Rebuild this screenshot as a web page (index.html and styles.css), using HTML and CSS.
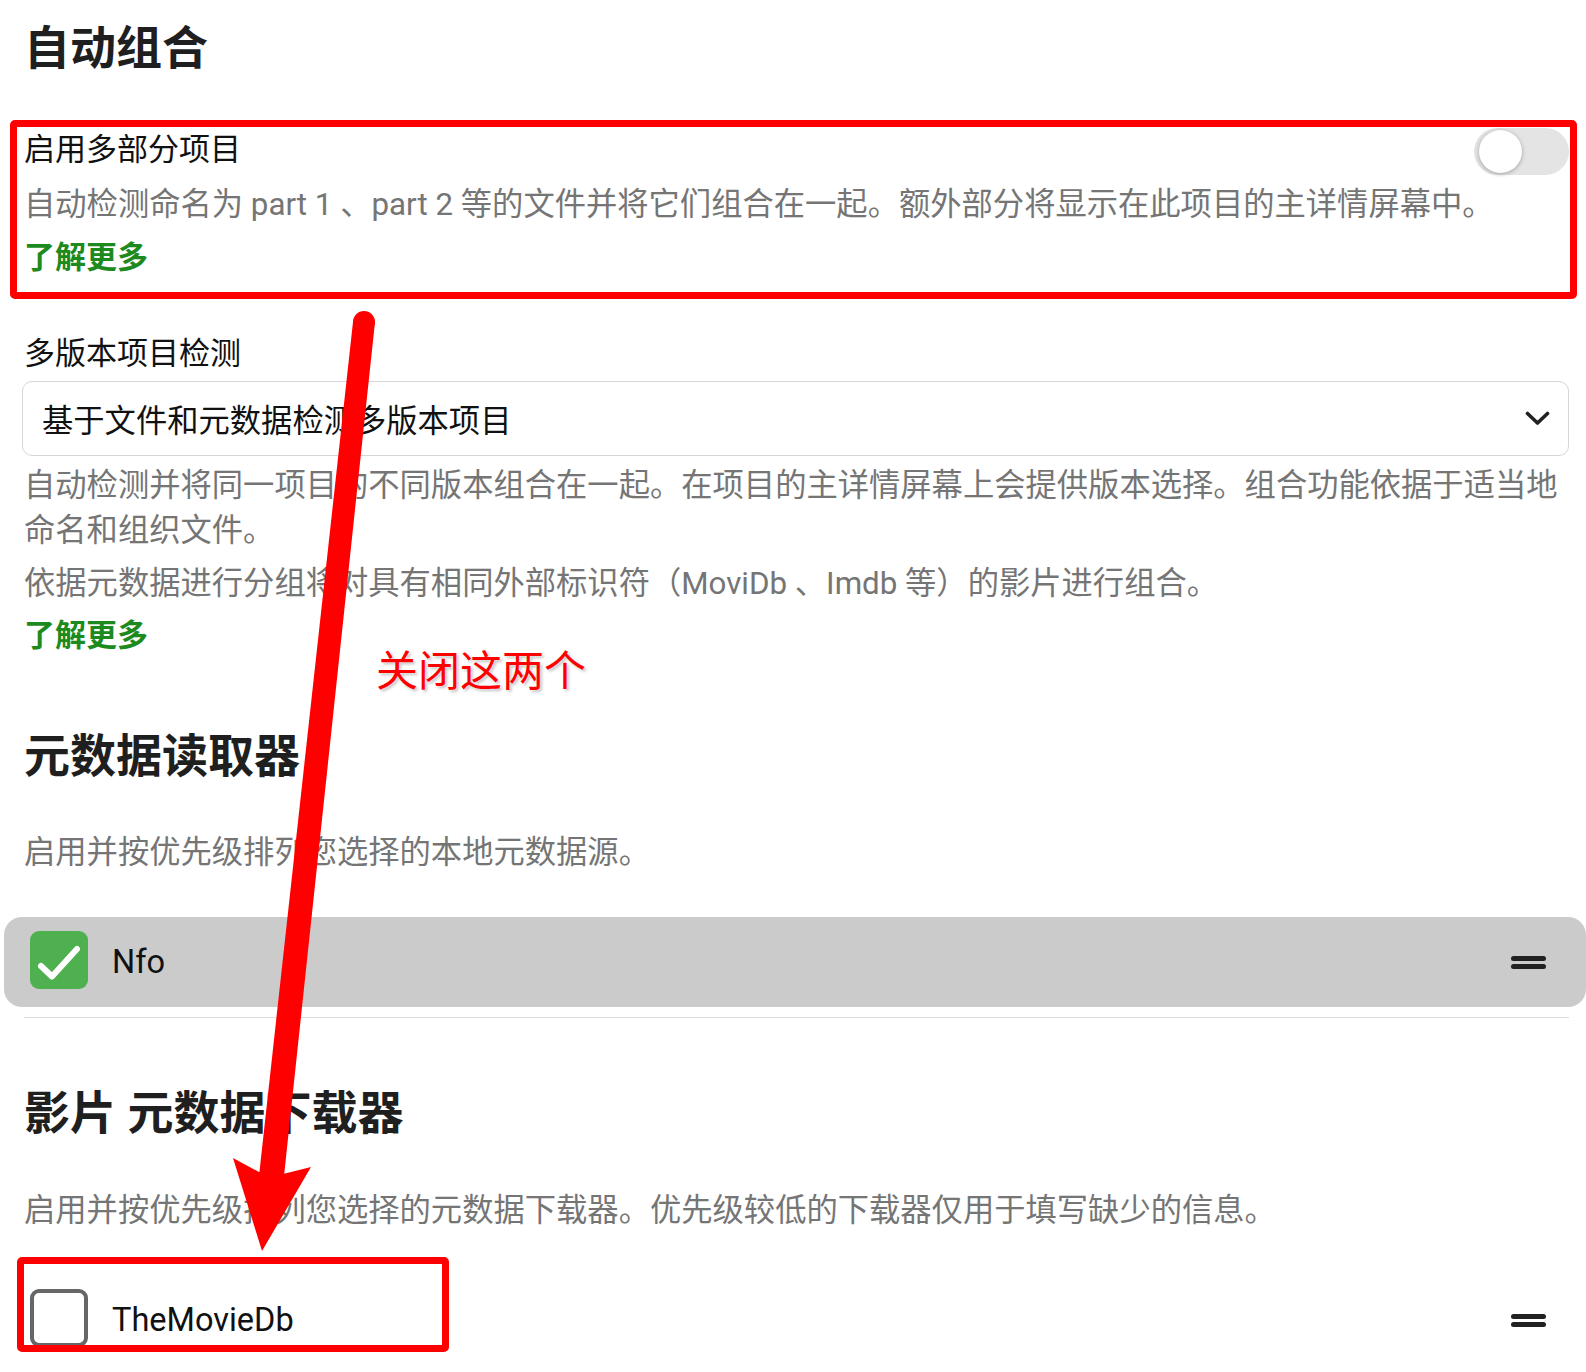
FILE: index.html
```html
<!DOCTYPE html>
<html lang="zh-CN">
<head>
  <meta charset="utf-8">
  <title>自动组合</title>
  <link rel="stylesheet" href="styles.css">
</head>
<body>
  <div class="page">
    <h1 class="section-title">自动组合</h1>

    <div class="setting multipart">
      <div class="setting-head">
        <span class="setting-label">启用多部分项目</span>
        <span class="toggle"><span class="knob"></span></span>
      </div>
      <p class="hint">自动检测命名为 part 1 、part 2 等的文件并将它们组合在一起。额外部分将显示在此项目的主详情屏幕中。</p>
      <a class="more" href="#">了解更多</a>
    </div>

    <div class="setting versions">
      <div class="setting-label">多版本项目检测</div>
      <div class="select">
        <span>基于文件和元数据检测多版本项目</span>
        <svg class="chevron" viewBox="0 0 25 15" width="25" height="15">
          <path d="M2.5 2.5 L12.5 12 L22.5 2.5" fill="none" stroke="#222" stroke-width="3.6" stroke-linecap="round" stroke-linejoin="round"/>
        </svg>
      </div>
      <p class="hint">自动检测并将同一项目的不同版本组合在一起。在项目的主详情屏幕上会提供版本选择。组合功能依据于适当地命名和组织文件。</p>
      <p class="hint">依据元数据进行分组将对具有相同外部标识符（MoviDb 、Imdb 等）的影片进行组合。</p>
      <a class="more" href="#">了解更多</a>
    </div>

    <h2 class="section-title readers">元数据读取器</h2>
    <p class="hint intro">启用并按优先级排列您选择的本地元数据源。</p>
    <div class="source active">
      <span class="check on">
        <svg viewBox="0 0 58 58" width="58" height="58">
          <polyline points="11,35 22,45.5 47,18" fill="none" stroke="#fff" stroke-width="6" stroke-linecap="round" stroke-linejoin="round"/>
        </svg>
      </span>
      <span class="source-name">Nfo</span>
      <span class="handle"><i></i><i></i></span>
    </div>
    <hr class="divider">

    <h2 class="section-title fetchers">影片 元数据下载器</h2>
    <p class="hint intro">启用并按优先级排列您选择的元数据下载器。优先级较低的下载器仅用于填写缺少的信息。</p>
    <div class="source">
      <span class="check"></span>
      <span class="source-name">TheMovieDb</span>
      <span class="handle"><i></i><i></i></span>
    </div>
  </div>

  <!-- annotations drawn over the screenshot -->
  <div class="mark mark-top"></div>
  <div class="mark mark-bottom"></div>
  <div class="note">关闭这两个</div>
  <svg class="arrow" viewBox="0 0 1586 1372" width="1586" height="1372">
    <circle cx="364" cy="322" r="11" fill="#f00"/>
    <polygon points="353,322 375,322 284,1176 259,1176" fill="#f00"/>
    <polygon points="233,1158 259,1172 283,1174 311,1167 262,1251" fill="#f00"/>
  </svg>
</body>
</html>
```

FILE: styles.css
```css
* {
  margin: 0;
  box-sizing: border-box;
}

body {
  font-family: Roboto, "Noto Sans CJK SC", sans-serif;
  background: #fff;
  color: #111;
  overflow: hidden;
}

.page {
  padding: 20px 17px 0 24px;
}

.section-title {
  font-size: 46px;
  line-height: 56px;
  font-weight: 700;
  color: #1f1f1f;
}

.setting-label {
  font-size: 31px;
  line-height: 44px;
  color: #111;
}

.hint {
  font-size: 31.3px;
  line-height: 46px;
  color: #757575;
}

.more {
  display: block;
  font-size: 31px;
  line-height: 46px;
  font-weight: 700;
  color: #1d8a1d;
  text-decoration: none;
}

/* multipart */
.multipart {
  margin-top: 52px;
}

.setting-head {
  display: flex;
  align-items: flex-start;
  justify-content: space-between;
}

.toggle {
  width: 95px;
  height: 47px;
  border-radius: 24px;
  background: #e4e4e4;
  display: flex;
  align-items: center;
  padding-left: 5px;
}

.knob {
  width: 43px;
  height: 43px;
  border-radius: 50%;
  background: #fff;
  box-shadow: 0 1px 4px rgba(0, 0, 0, 0.3);
}

.multipart .hint {
  margin-top: 7px;
}

.multipart .more {
  margin-top: 7px;
}

/* version detection */
.versions {
  margin-top: 51px;
}

.select {
  margin: 5px 0 0 -2px;
  height: 75px;
  border: 1px solid #d6d6d6;
  border-radius: 10px;
  display: flex;
  align-items: center;
  justify-content: space-between;
  padding: 0 18px 0 19px;
  font-size: 31.3px;
  color: #111;
}

.versions .hint {
  line-height: 45.5px;
  margin-top: 6.75px;
}

.versions .hint + .hint {
  margin-top: 7px;
}

.versions .more {
  margin-top: 6.75px;
}

/* metadata sources */
.readers {
  margin-top: 69px;
}

.intro {
  margin-top: 46px;
}

.fetchers {
  margin-top: 67px;
}

.fetchers + .intro {
  margin-top: 47.3px;
}

.source {
  margin: 41px -17px 0 -20px;
  height: 90px;
  border-radius: 18px;
  display: flex;
  align-items: center;
  padding: 0 40px 0 26px;
}

.source.active {
  background: #cbcbcb;
}

.check {
  width: 58px;
  height: 58px;
  border-radius: 9px;
  border: 4px solid #666;
  background: #fff;
  margin-bottom: 4px;
  flex-shrink: 0;
}

.check.on {
  border: 0;
  background: #4fb04f;
}

.check svg {
  display: block;
}

.source-name {
  margin-left: 24px;
  font-size: 32.5px;
  color: #111;
}

.handle {
  margin-left: auto;
  width: 35px;
  display: flex;
  flex-direction: column;
  gap: 3px;
}

.handle i {
  display: block;
  height: 5px;
  border-radius: 3px;
  background: #222;
}

.divider {
  margin-top: 10px;
  border: 0;
  height: 1px;
  background: #dcdcdc;
}

/* annotations */
.mark {
  position: absolute;
  border: 7px solid #f00;
  border-radius: 5px;
  pointer-events: none;
}

.mark-top {
  left: 10px;
  top: 120px;
  width: 1567px;
  height: 179px;
}

.mark-bottom {
  left: 17px;
  top: 1257px;
  width: 432px;
  height: 95px;
}

.note {
  position: absolute;
  left: 376px;
  top: 643px;
  font-family: "Noto Sans CJK SC", sans-serif;
  font-size: 42px;
  line-height: 50px;
  color: #f00;
  text-shadow: 0 0 2px #fff, 2px 2px 3px rgba(0, 0, 0, 0.25);
}

.arrow {
  position: absolute;
  left: 0;
  top: 0;
  pointer-events: none;
}
```
